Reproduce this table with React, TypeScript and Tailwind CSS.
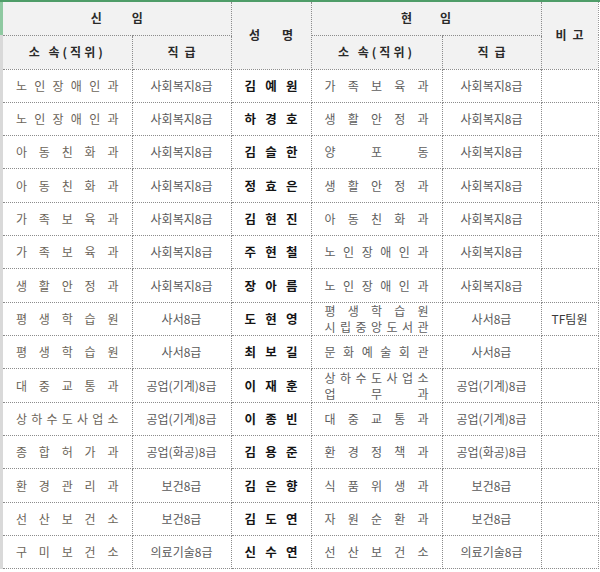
const rows: [string[], string, string, string[], string, string][] = [
  [["노인장애인과"], "사회복지8급", "김예원", ["가족보육과"], "사회복지8급", ""],
  [["노인장애인과"], "사회복지8급", "하경호", ["생활안정과"], "사회복지8급", ""],
  [["아동친화과"], "사회복지8급", "김슬한", ["양포동"], "사회복지8급", ""],
  [["아동친화과"], "사회복지8급", "정효은", ["생활안정과"], "사회복지8급", ""],
  [["가족보육과"], "사회복지8급", "김현진", ["아동친화과"], "사회복지8급", ""],
  [["가족보육과"], "사회복지8급", "주현철", ["노인장애인과"], "사회복지8급", ""],
  [["생활안정과"], "사회복지8급", "장아름", ["노인장애인과"], "사회복지8급", ""],
  [["평생학습원"], "사서8급", "도현영", ["평생학습원", "시립중앙도서관"], "사서8급", "TF팀원"],
  [["평생학습원"], "사서8급", "최보길", ["문화예술회관"], "사서8급", ""],
  [["대중교통과"], "공업(기계)8급", "이재훈", ["상하수도사업소", "업무과"], "공업(기계)8급", ""],
  [["상하수도사업소"], "공업(기계)8급", "이종빈", ["대중교통과"], "공업(기계)8급", ""],
  [["종합허가과"], "공업(화공)8급", "김용준", ["환경정책과"], "공업(화공)8급", ""],
  [["환경관리과"], "보건8급", "김은향", ["식품위생과"], "보건8급", ""],
  [["선산보건소"], "보건8급", "김도연", ["자원순환과"], "보건8급", ""],
  [["구미보건소"], "의료기술8급", "신수연", ["선산보건소"], "의료기술8급", ""],
];

function Spread({ text, className }: { text: string; className: string }) {
  return (
    <div className={`flex justify-between ${className}`}>
      {[...text].map((c, i) => (
        <span key={i}>{c}</span>
      ))}
    </div>
  );
}

const cell = "border border-dotted border-[#8c8c8c] p-0 align-middle";

export default function App() {
  return (
    <div
      className="w-[600px] h-[572px] bg-white overflow-hidden border-t-2 border-[#4f9d69]"
      style={{ fontFamily: '"Noto Sans CJK KR", "Noto Sans", sans-serif' }}
    >
      <div className="flex">
        {/* row header strip */}
        <div className="w-[3px] flex flex-col shrink-0">
          <div className="h-[33px] bg-[#8fc9a1]" />
          <div className="flex-1 bg-[#d9d9d9]" />
        </div>

        <table className="table-fixed border-collapse w-[595px] text-[12px] leading-[16px]">
          <colgroup>
            <col className="w-[129px]" />
            <col className="w-[99px]" />
            <col className="w-[80px]" />
            <col className="w-[131px]" />
            <col className="w-[99px]" />
            <col className="w-[57px]" />
          </colgroup>
          <thead className="bg-[#f2f2f2] text-[#2a2a2a] font-bold">
            <tr className="h-[33px]">
              <th colSpan={2} className={`${cell} border-t-0 border-l-0`}>
                <div className="flex justify-center gap-[30px]">
                  <span>신</span>
                  <span>임</span>
                </div>
              </th>
              <th rowSpan={2} className={`${cell} border-t-0`}>
                <div className="flex justify-center gap-[22px]">
                  <span>성</span>
                  <span>명</span>
                </div>
              </th>
              <th colSpan={2} className={`${cell} border-t-0`}>
                <div className="flex justify-center gap-[28px]">
                  <span>현</span>
                  <span>임</span>
                </div>
              </th>
              <th rowSpan={2} className={`${cell} border-t-0 border-r border-r-[#9a9a9a]`}>
                <div className="flex justify-center gap-[6px]">
                  <span>비</span>
                  <span>고</span>
                </div>
              </th>
            </tr>
            <tr className="h-[34px]">
              <th className={`${cell} border-l-0 tracking-[3px]`}>소 속(직위)</th>
              <th className={`${cell}`}>
                <div className="flex justify-center gap-[6px]">
                  <span>직</span>
                  <span>급</span>
                </div>
              </th>
              <th className={`${cell} tracking-[3px]`}>소 속(직위)</th>
              <th className={`${cell}`}>
                <div className="flex justify-center gap-[6px]">
                  <span>직</span>
                  <span>급</span>
                </div>
              </th>
            </tr>
          </thead>
          <tbody>
            {rows.map(([from, fromGrade, name, to, toGrade, note], i) => (
              <tr key={i} className="h-[33.33px]">
                <td className={`${cell} border-l-0 text-[#6b6459]`}>
                  {from.map((t) => (
                    <Spread key={t} text={t} className="px-[13px]" />
                  ))}
                </td>
                <td className={`${cell} text-center text-[#5a5a5a]`}>{fromGrade}</td>
                <td className={`${cell} font-bold text-[#141414] text-[12.5px]`}>
                  <Spread text={name} className="px-[13px]" />
                </td>
                <td className={`${cell} text-[#5e5e5e]`}>
                  {to.map((t) => (
                    <Spread key={t} text={t} className="px-[13px]" />
                  ))}
                </td>
                <td className={`${cell} text-center text-[#5a5a5a]`}>{toGrade}</td>
                <td className={`${cell} text-center text-[#3a3a3a] border-r border-r-[#9a9a9a]`}>
                  {note}
                </td>
              </tr>
            ))}
          </tbody>
        </table>
      </div>
    </div>
  );
}
